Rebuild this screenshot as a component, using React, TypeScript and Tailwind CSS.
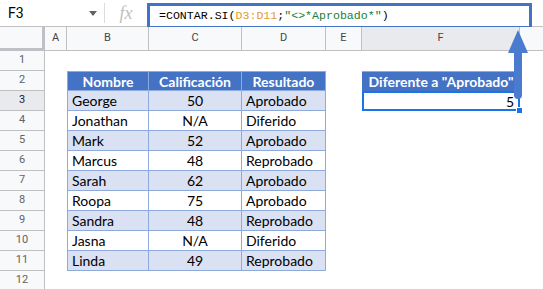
import React from "react";

const rows: { n: string; c: string; r: string }[] = [
  { n: "George", c: "50", r: "Aprobado" },
  { n: "Jonathan", c: "N/A", r: "Diferido" },
  { n: "Mark", c: "52", r: "Aprobado" },
  { n: "Marcus", c: "48", r: "Reprobado" },
  { n: "Sarah", c: "62", r: "Aprobado" },
  { n: "Roopa", c: "75", r: "Aprobado" },
  { n: "Sandra", c: "48", r: "Reprobado" },
  { n: "Jasna", c: "N/A", r: "Diferido" },
  { n: "Linda", c: "49", r: "Reprobado" },
];

const cols = [
  { l: "A", w: "w-[22px]" },
  { l: "B", w: "w-[82px]" },
  { l: "C", w: "w-[93px]" },
  { l: "D", w: "w-[84px]" },
  { l: "E", w: "w-[36px]" },
  { l: "F", w: "w-[158px]" },
];

function RowHeader({ n }: { n: number }) {
  const sel = n === 3;
  return (
    <div
      className={`w-[45px] h-[20px] shrink-0 flex items-center justify-center border-r border-b border-[#c0c0c0] text-[11px] font-['Roboto',sans-serif] ${
        sel ? "bg-[#e8eaed] text-[#202124]" : "bg-[#f8f9fa] text-[#5f6368]"
      }`}
    >
      {n}
    </div>
  );
}

function Cell({
  className = "",
  children,
}: {
  className?: string;
  children?: React.ReactNode;
}) {
  return <div className={`h-[20px] shrink-0 flex items-center ${className}`}>{children}</div>;
}

export default function App() {
  const tbl = "font-['Lato',sans-serif] text-[14px] text-black";
  return (
    <div className="relative w-[543px] h-[289px] overflow-hidden bg-white">
      {/* formula bar */}
      <div className="h-[27px] flex items-center border-b border-[#c0c0c0] bg-white">
        <div className="w-[104px] flex items-center pl-[8px] pr-[7px] justify-between">
          <span className="font-['Roboto',sans-serif] text-[14px] text-black">F3</span>
          <svg width="8" height="5" viewBox="0 0 8 5">
            <path d="M0 0h8L4 5z" fill="#5f6368" />
          </svg>
        </div>
        <div className="w-px h-[20px] bg-[#dadce0]" />
        <span className="w-[42px] text-center font-['Liberation_Serif',serif] italic text-[18px] text-[#c0c0c0] leading-none">
          fx
        </span>
        <div className="mt-[3px] self-start h-[26px] w-[385px] border-[3px] border-[#4472c4] flex items-center pl-[9px] font-['Liberation_Mono',monospace] text-[11.6px] text-black whitespace-pre">
          =CONTAR.SI(<span className="text-[#e69a2e]">D3:D11</span>;
          <span className="text-[#188038]">"&lt;&gt;*Aprobado*"</span>)
        </div>
      </div>

      {/* column headers */}
      <div className="flex h-[24px] font-['Roboto',sans-serif] text-[11px] text-[#444]">
        <div className="w-[45px] shrink-0 bg-[#f8f9fa] border-r-[3px] border-b-[3px] border-[#bdc1c6]" />
        {cols.map((c) => (
          <div
            key={c.l}
            className={`${c.w} shrink-0 flex items-center justify-center border-r border-b border-[#c0c0c0] ${
              c.l === "F" ? "bg-[#e8eaed]" : "bg-[#f8f9fa]"
            }`}
          >
            {c.l}
          </div>
        ))}
        <div className="flex-1 bg-[#f8f9fa] border-b border-[#c0c0c0]" />
      </div>

      {/* row 1 */}
      <div className="flex">
        <RowHeader n={1} />
      </div>

      {/* row 2 headers */}
      <div className="flex">
        <RowHeader n={2} />
        <Cell className="w-[22px]" />
        <div className={`flex bg-[#4472c4] font-bold ${tbl}`}>
          <Cell className="w-[82px] justify-center border border-[#8ea9db] text-white">Nombre</Cell>
          <Cell className="w-[93px] justify-center border-y border-r border-[#8ea9db] text-white">
            Calificación
          </Cell>
          <Cell className="w-[84px] justify-center border-y border-r border-[#8ea9db] text-white">
            Resultado
          </Cell>
        </div>
        <Cell className="w-[36px]" />
        <Cell
          className={`w-[158px] justify-center bg-[#4472c4] border-t border-[#8ea9db] font-bold ${tbl}`}
        >
          <span className="text-white">Diferente a "Aprobado"</span>
        </Cell>
      </div>

      {/* data rows */}
      {rows.map((r, i) => {
        const n = i + 3;
        const bg = i % 2 === 0 ? "bg-[#d9e1f2]" : "bg-white";
        return (
          <div className="flex" key={r.n}>
            <RowHeader n={n} />
            <Cell className="w-[22px]" />
            <div className={`flex ${bg} ${tbl}`}>
              <Cell className="w-[82px] pl-[4px] border-x border-b border-[#8ea9db]">{r.n}</Cell>
              <Cell className="w-[93px] justify-center border-r border-b border-[#8ea9db]">{r.c}</Cell>
              <Cell className="w-[84px] pl-[4px] border-r border-b border-[#8ea9db]">{r.r}</Cell>
            </div>
            {n === 3 && (
              <>
                <Cell className="w-[36px]" />
                <Cell
                  className={`relative w-[158px] justify-end pr-[4px] border-2 border-[#1a73e8] ${tbl}`}
                >
                  5
                  <span className="absolute right-[-5px] bottom-[-5px] w-[7px] h-[7px] bg-[#1a73e8] border border-white" />
                </Cell>
              </>
            )}
          </div>
        );
      })}

      {/* row 12 */}
      <div className="flex">
        <RowHeader n={12} />
      </div>

      {/* callout arrow */}
      <svg
        className="absolute left-[506px] top-[29px]"
        width="24"
        height="72"
        viewBox="0 0 24 72"
      >
        <path d="M12 1 L22 24 L16 24 L16 66 Q16 70 12 70 Q8 70 8 66 L8 24 L2 24 Z" fill="#4a7bcf" />
      </svg>
    </div>
  );
}
